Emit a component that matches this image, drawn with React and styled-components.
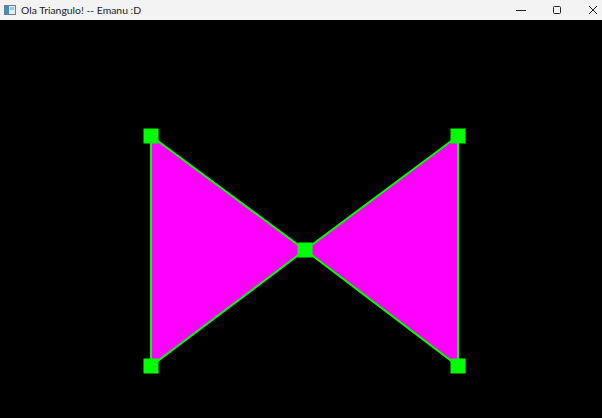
import React from "react";
import styled, { createGlobalStyle } from "styled-components";

const Global = createGlobalStyle`
  html, body { margin: 0; padding: 0; background: #000; }
  body { width: 602px; height: 418px; overflow: hidden; }
`;

const Window = styled.div`
  width: 602px;
  height: 418px;
  display: flex;
  flex-direction: column;
  background: #000;
`;

const TitleBar = styled.div`
  height: 20px;
  flex: none;
  display: flex;
  align-items: center;
  background: #f3f3f3;
  font-family: Lato, "Noto Sans", sans-serif;
  font-size: 10.4px;
  color: #1a1a1a;
`;

const AppIcon = styled.svg`
  width: 12px;
  height: 10px;
  margin-left: 4px;
  margin-right: 5px;
  flex: none;
`;

const Title = styled.span`
  flex: 1;
  white-space: nowrap;
  line-height: 20px;
`;

const Controls = styled.div`
  display: flex;
  gap: 18px;
  height: 100%;
`;

const ControlButton = styled.div`
  width: 18px;
  height: 20px;
  display: flex;
  align-items: center;
  justify-content: center;
`;

const Canvas = styled.div`
  flex: 1;
  background: #000;
`;

const Scene = styled.svg`
  display: block;
  width: 602px;
  height: 398px;
`;

const verts = [
  [151, 116],
  [151, 346],
  [305, 230],
  [458, 116],
  [458, 346],
];

export default function App() {
  return (
    <Window>
      <Global />
      <TitleBar>
        <AppIcon viewBox="0 0 12 10">
          <rect x="0.5" y="0.5" width="11" height="9" fill="#e8eef4" stroke="#6a7f94" />
          <rect x="1" y="1" width="4" height="8" fill="#3f8fd0" />
          <rect x="6" y="2" width="4" height="3" fill="#9cc7e8" />
        </AppIcon>
        <Title>Ola Triangulo! -- Emanu :D</Title>
        <Controls>
          <ControlButton>
            <svg width="10" height="10" viewBox="0 0 10 10">
              <line x1="0" y1="5.5" x2="10" y2="5.5" stroke="#222" strokeWidth="1" />
            </svg>
          </ControlButton>
          <ControlButton>
            <svg width="10" height="10" viewBox="0 0 10 10">
              <rect x="1.5" y="1.5" width="7" height="7" rx="1" fill="none" stroke="#222" strokeWidth="1" />
            </svg>
          </ControlButton>
          <ControlButton>
            <svg width="10" height="10" viewBox="0 0 10 10">
              <path d="M1 1 L9 9 M9 1 L1 9" stroke="#222" strokeWidth="1" />
            </svg>
          </ControlButton>
        </Controls>
      </TitleBar>
      <Canvas>
        <Scene viewBox="0 0 602 398">
          <polygon points="151,116 151,346 305,230" fill="#ff00ff" stroke="#00ff00" strokeWidth="2" />
          <polygon points="458,116 458,346 305,230" fill="#ff00ff" stroke="#00ff00" strokeWidth="2" />
          {verts.map(([x, y], i) => (
            <rect key={i} x={x - 7.5} y={y - 7.5} width="15" height="15" fill="#00ff00" />
          ))}
        </Scene>
      </Canvas>
    </Window>
  );
}
